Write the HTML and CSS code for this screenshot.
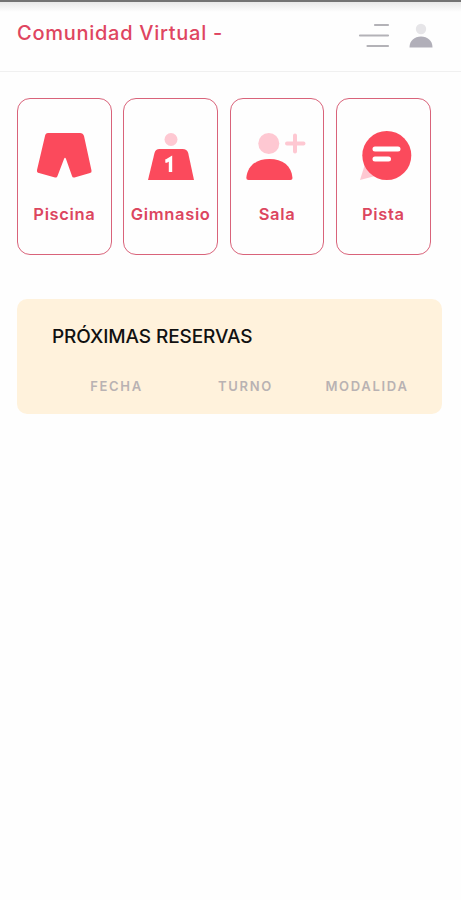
FILE: index.html
```html
<!DOCTYPE html>
<html lang="es">
<head>
    <meta charset="UTF-8">
    <meta name="viewport" content="width=device-width, initial-scale=1">
    <title>Comunidad Virtual</title>
    <link rel="stylesheet" href="styles.css">
</head>
<body>
    <header class="topbar">
        <h1><span>Comunidad Virtual -</span></h1>
        <div class="topbar-actions">
            <svg class="icon-menu" width="32" height="26" viewBox="0 0 32 26">
                <path d="M17 2H30M2 12.5H30M9.500 23H30" stroke="#b3b2b7" stroke-width="2.200" stroke-linecap="round"/>
            </svg>
            <svg class="icon-user" width="24" height="26" viewBox="0 0 24 26">
                <circle cx="12" cy="6" r="5.200" fill="#e6e5e8"/>
                <path d="M0.500 24.500C0.500 17.500 5.500 13.500 12 13.500S23.500 17.500 23.500 24.500Z" fill="#b1afb9"/>
            </svg>
        </div>
    </header>

    <nav class="cards">
        <a class="card">
            <svg width="64" height="54" viewBox="0 0 64 54">
                <path d="M16 3H48Q51 3 52 6L59.500 40.500Q60 42.500 58 43L42.500 47.500Q40.500 48 40 46L34 29Q33 26.500 32 29L25.500 46Q25 48 23 47.500L7 43Q4.500 42.500 5 40L13 6Q13.500 3 16 3Z" fill="#fb4a5c"/>
            </svg>
            <span>Piscina</span>
        </a>
        <a class="card">
            <svg width="64" height="54" viewBox="0 0 64 54">
                <circle cx="32" cy="9.500" r="6.500" fill="#fec8d2"/>
                <path d="M20.500 19H43.500Q48 19 49.200 23L55 50H9L15.500 23Q16.500 19 20.500 19Z" fill="#fb4a5c"/>
                <path d="M26.300 31H27.500L31.500 28.500V42" fill="none" stroke="#fff" stroke-width="3.400"/>
            </svg>
            <span>Gimnasio</span>
        </a>
        <a class="card">
            <svg width="64" height="54" viewBox="0 0 64 54">
                <circle cx="23.800" cy="13.500" r="10.500" fill="#fec8d2"/>
                <path d="M50 5.500V21.500M42 13.500H58.500" stroke="#fec8d2" stroke-width="4" stroke-linecap="round"/>
                <path d="M1.300 48C2.500 35.500 11.500 29 24.500 29S46.500 35.500 47.500 48Q47.500 50 45.500 50H3.500Q1.300 50 1.300 48Z" fill="#fb4a5c"/>
            </svg>
            <span>Sala</span>
        </a>
        <a class="card">
            <svg width="64" height="54" viewBox="0 0 64 54">
                <path d="M14 34L9 50L28 45Z" fill="#fec8d2"/>
                <circle cx="35.800" cy="25.500" r="24.500" fill="#fb4a5c"/>
                <path d="M24 19H47M24 29H37.500" stroke="#fff" stroke-width="5" stroke-linecap="round"/>
            </svg>
            <span>Pista</span>
        </a>
    </nav>

    <section class="bookings">
        <h2><span>PRÓXIMAS RESERVAS</span></h2>
        <table>
            <tr><th>FECHA</th><th>TURNO</th><th class="last">MODALIDA</th></tr>
        </table>
    </section>
</body>
</html>
```
FILE: styles.css
```css
* {
    box-sizing: border-box;
}
body {
    margin: 0;
    background: #fefefe;
    font-family: Inter, "Liberation Sans", sans-serif;
}
.topbar {
    display: flex;
    justify-content: space-between;
    height: 72px;
    padding: 20px 28px 0 17px;
    border-top: 2px solid #737373;
    border-bottom: 1px solid #f0f0f0;
    background: linear-gradient(#e8e8e8, #fefefe 10px);
}
h1 {
    margin: 0;
    color: #df4560;
    font-size: 20px;
    font-weight: 500;
    line-height: 22px;
    letter-spacing: 0.73px;
    white-space: nowrap;
}
.topbar-actions {
    display: flex;
    gap: 19px;
    padding-top: 1px;
}
.cards {
    display: flex;
    gap: 11.500px;
    padding: 26px 0 0 17px;
}
.card {
    display: flex;
    flex-direction: column;
    align-items: center;
    width: 94.800px;
    height: 157px;
    padding-top: 31px;
    border: 1px solid #d9637a;
    border-radius: 13px;
    color: #dc465f;
    font-size: 16.500px;
    font-weight: 600;
    line-height: 20px;
    white-space: nowrap;
}
.card svg {
    flex: none;
}
.card span {
    margin-top: 20px;
    letter-spacing: 0.65px;
}
.bookings {
    height: 115px;
    margin: 44px 19px 0 17px;
    padding: 27px 32px 0 35px;
    border-radius: 10px;
    background: #fff2dc;
}
h2 {
    margin: 0;
    color: #111;
    font-size: 19px;
    font-weight: 500;
    line-height: 22px;
    letter-spacing: -0.1px;
    white-space: nowrap;
}
table {
    width: 358px;
    margin-top: 28px;
    table-layout: fixed;
    border-collapse: collapse;
}
th {
    width: 129px;
    padding: 0;
    color: #b9b2b3;
    font-size: 13px;
    font-weight: 600;
    line-height: 20px;
    letter-spacing: 1.700px;
    text-align: center;
}
th.last {
    width: 100px;
    padding-left: 14px;
}
```
